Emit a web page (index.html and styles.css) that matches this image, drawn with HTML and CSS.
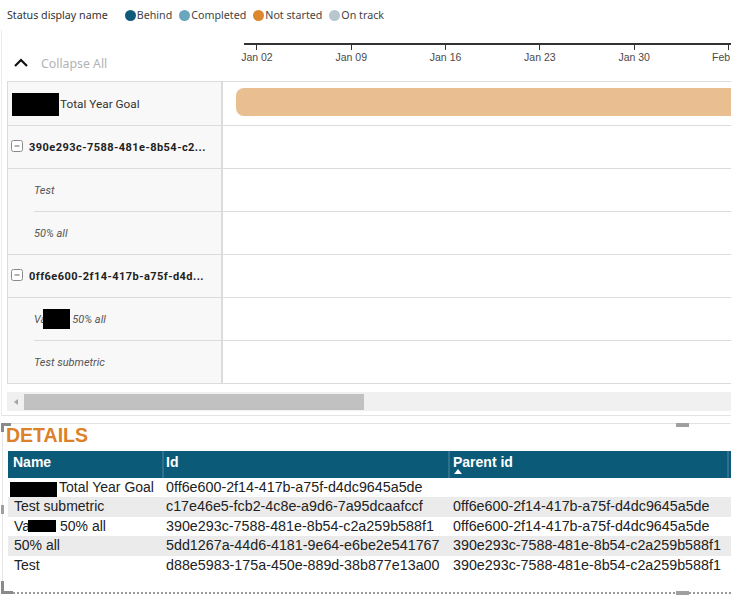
FILE: index.html
```html
<!DOCTYPE html>
<html>
<head>
<meta charset="utf-8">
<link rel="stylesheet" href="styles.css">
</head>
<body>
<div class="legend">
  <span class="legend-title">Status display name</span>
  <span class="legend-item"><i class="dot behind"></i>Behind</span>
  <span class="legend-item"><i class="dot completed"></i>Completed</span>
  <span class="legend-item"><i class="dot notstarted"></i>Not started</span>
  <span class="legend-item"><i class="dot ontrack"></i>On track</span>
</div>

<div class="gantt">
  <div class="gantt-head">
    <div class="collapse">
      <svg class="chev" width="14" height="9" viewBox="0 0 14 9"><polyline points="1,8 7,2 13,8" fill="none" stroke="#111" stroke-width="2.2"/></svg>
      <span class="collapse-text">Collapse All</span>
    </div>
    <div class="axis">
      <div class="axis-line"></div>
      <div class="ticks">
        <div class="tick"><i class="tick-mark"></i><span>Jan 02</span></div>
        <div class="tick"><i class="tick-mark"></i><span>Jan 09</span></div>
        <div class="tick"><i class="tick-mark"></i><span>Jan 16</span></div>
        <div class="tick"><i class="tick-mark"></i><span>Jan 23</span></div>
        <div class="tick"><i class="tick-mark"></i><span>Jan 30</span></div>
        <div class="tick"><i class="tick-mark"></i><span>Feb 06</span></div>
      </div>
    </div>
  </div>

  <div class="grid">
    <div class="grow first">
      <div class="lcell goal"><i class="redact r-goal"></i><span class="goal-text">Total Year Goal</span></div>
      <div class="rcell"><div class="bar"></div></div>
    </div>
    <div class="grow">
      <div class="lcell parent">
        <svg class="minus" width="12" height="12" viewBox="0 0 12 12"><rect x="0.5" y="0.5" width="11" height="11" rx="2" fill="#fff" stroke="#8a8a8a"/><line x1="3.5" y1="6" x2="8.5" y2="6" stroke="#666" stroke-width="1"/></svg>
        <span class="parent-text">390e293c-7588-481e-8b54-c2...</span>
      </div>
      <div class="rcell"></div>
    </div>
    <div class="grow sub">
      <div class="lcell"><div class="sublabel">Test</div></div>
      <div class="rcell"></div>
    </div>
    <div class="grow">
      <div class="lcell child"><span class="child-text">50% all</span></div>
      <div class="rcell"></div>
    </div>
    <div class="grow">
      <div class="lcell parent">
        <svg class="minus" width="12" height="12" viewBox="0 0 12 12"><rect x="0.5" y="0.5" width="11" height="11" rx="2" fill="#fff" stroke="#8a8a8a"/><line x1="3.5" y1="6" x2="8.5" y2="6" stroke="#666" stroke-width="1"/></svg>
        <span class="parent-text">0ff6e600-2f14-417b-a75f-d4d...</span>
      </div>
      <div class="rcell"></div>
    </div>
    <div class="grow sub">
      <div class="lcell"><div class="sublabel"><span>Va</span><i class="redact r-va"></i><span class="after-va">50% all</span></div></div>
      <div class="rcell"></div>
    </div>
    <div class="grow">
      <div class="lcell child"><span class="child-text">Test submetric</span></div>
      <div class="rcell"></div>
    </div>
  </div>

  <div class="scroll">
    <i class="scroll-arrow"></i>
    <div class="thumb"></div>
  </div>
</div>

<div class="details">
  <i class="corner corner-tl"></i>
  <i class="corner corner-bl"></i>
  <i class="handle handle-top"></i>
  <i class="handle handle-bottom"></i>
  <i class="handle-left"></i>
  <div class="details-title">DETAILS</div>
  <div class="table">
    <div class="thead">
      <div class="th">Name</div>
      <div class="th sep">Id</div>
      <div class="th sep">Parent id<i class="sort"></i></div>
      <div class="th sep"></div>
    </div>
    <div class="trow">
      <div class="td c1"><i class="redact t-goal"></i>Total Year Goal</div>
      <div class="td c2">0ff6e600-2f14-417b-a75f-d4dc9645a5de</div>
      <div class="td c3"></div>
      <div class="td"></div>
    </div>
    <div class="trow alt">
      <div class="td c1">Test submetric</div>
      <div class="td c2">c17e46e5-fcb2-4c8e-a9d6-7a95dcaafccf</div>
      <div class="td c3">0ff6e600-2f14-417b-a75f-d4dc9645a5de</div>
      <div class="td"></div>
    </div>
    <div class="trow">
      <div class="td c1">Va<i class="redact t-va"></i> 50% all</div>
      <div class="td c2">390e293c-7588-481e-8b54-c2a259b588f1</div>
      <div class="td c3">0ff6e600-2f14-417b-a75f-d4dc9645a5de</div>
      <div class="td"></div>
    </div>
    <div class="trow alt">
      <div class="td c1">50% all</div>
      <div class="td c2">5dd1267a-44d6-4181-9e64-e6be2e541767</div>
      <div class="td c3">390e293c-7588-481e-8b54-c2a259b588f1</div>
      <div class="td"></div>
    </div>
    <div class="trow">
      <div class="td c1">Test</div>
      <div class="td c2">d88e5983-175a-450e-889d-38b877e13a00</div>
      <div class="td c3">390e293c-7588-481e-8b54-c2a259b588f1</div>
      <div class="td"></div>
    </div>
  </div>
</div>
</body>
</html>
```

FILE: styles.css
```css
* { box-sizing: border-box; }
html, body { margin: 0; padding: 0; }
body {
  width: 731px;
  height: 596px;
  overflow: hidden;
  background: #fff;
  font-family: "Noto Sans", sans-serif;
}

/* legend */
.legend {
  height: 30px;
  display: flex;
  align-items: center;
  gap: 7px;
  padding-left: 7px;
  font-size: 10.7px;
  color: #333;
  white-space: nowrap;
}
.legend-title { margin-right: 10px; }
.legend-item { display: flex; align-items: center; gap: 1px; color: #444; }
.dot { display: inline-block; width: 11px; height: 11px; border-radius: 50%; }
.behind { background: #0f5a79; }
.completed { background: #6aa7bf; }
.notstarted { background: #dc862f; }
.ontrack { background: #b7c6cf; }

/* gantt */
.gantt {
  margin-left: 1px;
  border-left: 1px solid #ececec;
  border-bottom: 1px solid #e4e4e4;
  padding: 0 0 4px 5px;
  overflow: hidden;
}
.gantt-head { display: flex; height: 51px; }
.collapse {
  flex: none;
  width: 216px;
  height: 20px;
  margin-top: 23px;
  display: flex;
  align-items: center;
  padding-left: 7px;
}
.chev { display: block; margin-top: -2px; }
.collapse-text {
  margin-left: 13px;
  font-size: 12.3px;
  color: #b3b3b3;
}
.axis { flex: 1; min-width: 0; }
.axis-line {
  margin: 13px 0 0 21px;
  height: 2px;
  background: #333;
}
.ticks { display: flex; margin-left: -13.2px; }
.tick {
  flex: 0 0 94.3px;
  display: flex;
  flex-direction: column;
  align-items: center;
}
.tick-mark { display: block; width: 1px; height: 5px; background: #333; }
.tick span {
  margin-top: 1px;
  font-family: "Liberation Sans", Arial, sans-serif;
  font-size: 10.5px;
  line-height: 12px;
  color: #4a4a4a;
  white-space: nowrap;
}

.grid { border-top: 1px solid #dcdcdc; }
.grow {
  display: flex;
  height: 43px;
  border-bottom: 1px solid #dcdcdc;
}
.grow.first { height: 44px; }
.grow.sub { border-bottom: none; }
.lcell {
  flex: none;
  width: 216px;
  background: #f8f8f8;
  border-left: 1px solid #dcdcdc;
  border-right: 2px solid #dcdcdc;
  display: flex;
  align-items: center;
  font-family: Roboto, "Liberation Sans", sans-serif;
  font-size: 11px;
  white-space: nowrap;
}
.rcell { flex: 1; min-width: 0; }
.grow.sub .rcell { border-bottom: 1px solid #dcdcdc; }
.grow.sub .lcell { padding-left: 26px; align-items: stretch; }
.sublabel {
  flex: 1;
  display: flex;
  align-items: center;
  border-bottom: 1px solid #dcdcdc;
  font-style: italic;
  color: #555;
}
.goal { padding-left: 4px; }
.goal-text { margin-left: 1px; font-size: 11.8px; color: #333; }
.parent { padding-left: 3px; }
.minus { display: block; flex: none; margin-top: -2px; }
.parent-text {
  margin-left: 6px;
  font-weight: bold;
  letter-spacing: 0.45px;
  color: #222;
}
.child { padding-left: 26px; }
.child-text { font-style: italic; color: #555; }

.redact { display: inline-block; background: #000; flex: none; }
.r-goal { width: 47px; height: 23px; margin-top: 2px; }
.r-va { width: 27px; height: 20px; margin-left: -3px; }
.after-va { margin-left: 2px; }

.bar {
  margin: 6px 0 0 13px;
  height: 28px;
  background: #e9bf92;
  border-radius: 8px 0 0 8px;
}

.scroll {
  margin-top: 8px;
  height: 19px;
  background: #f0f0f0;
  display: flex;
  align-items: center;
}
.scroll-arrow {
  display: block;
  margin-left: 7px;
  width: 0;
  height: 0;
  border-style: solid;
  border-width: 3.5px 4px 3.5px 0;
  border-color: transparent #a3a3a3 transparent transparent;
}
.thumb {
  margin-left: 6px;
  width: 340px;
  height: 16px;
  background: #c1c1c1;
}

/* details */
.details {
  position: relative;
  margin: 7px 0 0 2px;
  height: 171px;
  border-top: 1px solid #e2e2e2;
  border-left: 1px solid #e6e6e6;
  border-bottom: 2px dotted #9a9a9a;
}
.corner { position: absolute; left: -2px; width: 10px; border-color: #8a8a8a; border-style: solid; }
.corner-tl { top: -1px; height: 9px; border-width: 3px 0 0 3px; }
.corner-bl { bottom: -2px; height: 13px; width: 12px; border-width: 0 0 3px 3px; }
.handle { position: absolute; left: 673px; width: 13px; height: 4px; background: #a0a0a0; }
.handle-top { top: -1px; }
.handle-bottom { bottom: -3px; }
.handle-left { position: absolute; left: -2px; top: 81px; width: 3px; height: 9px; background: #a0a0a0; }

.details-title {
  padding-left: 3px;
  font-family: "Liberation Sans", Arial, sans-serif;
  font-weight: bold;
  font-size: 19.5px;
  line-height: 22px;
  color: #dd8129;
}
.table {
  margin: 5px 0 0 5px;
  font-family: "Liberation Sans", Arial, sans-serif;
  font-size: 14px;
}
.thead, .trow {
  display: grid;
  grid-template-columns: 154px 286px 279px 1fr;
}
.thead { height: 27px; background: #0b5a78; }
.th {
  padding: 3px 0 0 5px;
  font-weight: bold;
  line-height: 16px;
  color: #fff;
  white-space: nowrap;
}
.th.sep { border-left: 2px solid #2f718c; padding-left: 2px; }
.th.sep:nth-child(3) { padding-left: 3px; }
.sort {
  display: block;
  width: 0;
  height: 0;
  margin: -1px 0 0 1px;
  border-style: solid;
  border-width: 0 4px 5px 4px;
  border-color: transparent transparent #fff transparent;
}
.trow { height: 19.4px; }
.trow.alt { background: #ebebeb; }
.td {
  line-height: 19.4px;
  color: #222;
  white-space: nowrap;
  overflow: hidden;
}
.c1 { padding-left: 6px; }
.c2 { padding-left: 4px; font-size: 14.3px; }
.c3 { padding-left: 5px; font-size: 14.3px; }
.t-goal { width: 47px; height: 15px; margin: 0 2px 0 -4px; vertical-align: -5px; }
.t-va { width: 28px; height: 12px; margin-left: -2px; vertical-align: -1px; }
```
